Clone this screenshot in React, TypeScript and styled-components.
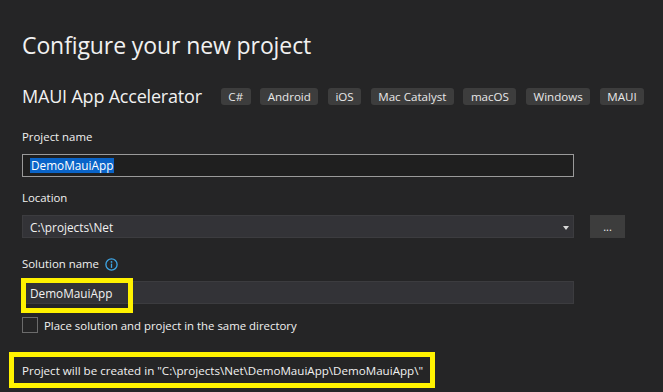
import React from "react";
import styled, { createGlobalStyle } from "styled-components";

const GlobalStyle = createGlobalStyle`
  body {
    margin: 0;
    background: #252526;
    color: #f1f1f1;
    font-family: "Open Sans", "Noto Sans", sans-serif;
  }
`;

const Page = styled.main`
  width: 663px;
  height: 392px;
  box-sizing: border-box;
  padding: 29px 0 0 22px;
  display: flex;
  flex-direction: column;
  overflow: hidden;
`;

const Title = styled.h1`
  margin: 0;
  font-size: 23px;
  font-weight: 400;
  line-height: 32px;
  letter-spacing: -0.1px;
`;

const TemplateRow = styled.div`
  display: flex;
  align-items: center;
  margin-top: 23px;
  height: 24px;
`;

const TemplateName = styled.span`
  font-size: 18px;
  margin-right: 19px;
  letter-spacing: -0.2px;
`;

const Tags = styled.div`
  display: flex;
  gap: 9.5px;
`;

const Tag = styled.span`
  background: #3d3d3d;
  color: #e8e8e8;
  font-size: 11.6px;
  line-height: 17px;
  padding: 0 7.5px;
  border-radius: 3px;
`;

const Label = styled.div<{ $top: number }>`
  margin-top: ${(p) => p.$top}px;
  font-size: 11.4px;
  line-height: 16px;
  display: flex;
  align-items: center;
  gap: 6px;
`;

const Row = styled.div<{ $top: number }>`
  margin-top: ${(p) => p.$top}px;
  display: flex;
  gap: 16px;
`;

const TextBox = styled.div<{ $variant: "outlined" | "filled" }>`
  position: relative;
  width: 552px;
  height: 23px;
  box-sizing: border-box;
  display: flex;
  align-items: center;
  padding: 0 7px;
  font-size: 11.8px;
  white-space: nowrap;
  background: ${(p) => (p.$variant === "outlined" ? "#1f1f1f" : "#333337")};
  border: 1px solid ${(p) => (p.$variant === "outlined" ? "#9a9a9a" : "#3c3c3f")};
`;

const Selected = styled.span`
  background: #0a64c8;
  color: #ffffff;
  padding: 0 1px;
  line-height: 15px;
`;

const Caret = styled.span`
  position: absolute;
  right: 4px;
  top: 10px;
  width: 0;
  height: 0;
  border-left: 3.5px solid transparent;
  border-right: 3.5px solid transparent;
  border-top: 4px solid #d8d8d8;
`;

const BrowseButton = styled.button`
  width: 35px;
  height: 23px;
  border: none;
  background: #3d3d3d;
  color: #f1f1f1;
  font-family: inherit;
  font-size: 11px;
  padding: 0;
  line-height: 23px;
`;

const Highlight = styled.span<{ $w: number; $h: number }>`
  position: absolute;
  left: -2px;
  top: -4px;
  width: ${(p) => p.$w}px;
  height: ${(p) => p.$h}px;
  box-sizing: border-box;
  border: 5px solid #fff200;
  pointer-events: none;
`;

const CheckRow = styled.label`
  margin-top: 13px;
  display: flex;
  align-items: center;
  gap: 6px;
  font-size: 11.4px;
`;

const CheckBox = styled.span`
  width: 16px;
  height: 16px;
  box-sizing: border-box;
  border: 1px solid #6b6b6b;
  background: #252526;
`;

const PathNote = styled.div`
  margin: 19px 0 0 -13px;
  width: 426px;
  height: 36px;
  box-sizing: border-box;
  border: 5px solid #fff200;
  padding-left: 8px;
  display: flex;
  align-items: center;
  font-size: 11.6px;
  white-space: nowrap;
`;

const InfoIcon = () => (
  <svg width="13" height="13" viewBox="0 0 13 13">
    <circle cx="6.5" cy="6.5" r="5.6" fill="none" stroke="#3ea6e6" strokeWidth="1.3" />
    <circle cx="6.5" cy="3.9" r="0.9" fill="#3ea6e6" />
    <rect x="5.85" y="5.6" width="1.3" height="4.3" fill="#3ea6e6" />
  </svg>
);

const platforms = ["C#", "Android", "iOS", "Mac Catalyst", "macOS", "Windows", "MAUI"];

const App: React.FC = () => {
  return (
    <>
      <GlobalStyle />
      <Page>
        <Title>Configure your new project</Title>
        <TemplateRow>
          <TemplateName>MAUI App Accelerator</TemplateName>
          <Tags>
            {platforms.map((p) => (
              <Tag key={p}>{p}</Tag>
            ))}
          </Tags>
        </TemplateRow>

        <Label $top={21}>Project name</Label>
        <Row $top={9}>
          <TextBox $variant="outlined">
            <Selected>DemoMauiApp</Selected>
          </TextBox>
        </Row>

        <Label $top={13}>Location</Label>
        <Row $top={9}>
          <TextBox $variant="filled">
            C:\projects\Net
            <Caret />
          </TextBox>
          <BrowseButton>...</BrowseButton>
        </Row>

        <Label $top={18}>
          Solution name <InfoIcon />
        </Label>
        <Row $top={9}>
          <TextBox $variant="filled">
            DemoMauiApp
            <Highlight $w={112} $h={35} />
          </TextBox>
        </Row>

        <CheckRow>
          <CheckBox />
          Place solution and project in the same directory
        </CheckRow>

        <PathNote>Project will be created in "C:\projects\Net\DemoMauiApp\DemoMauiApp\"</PathNote>
      </Page>
    </>
  );
};

export default App;
